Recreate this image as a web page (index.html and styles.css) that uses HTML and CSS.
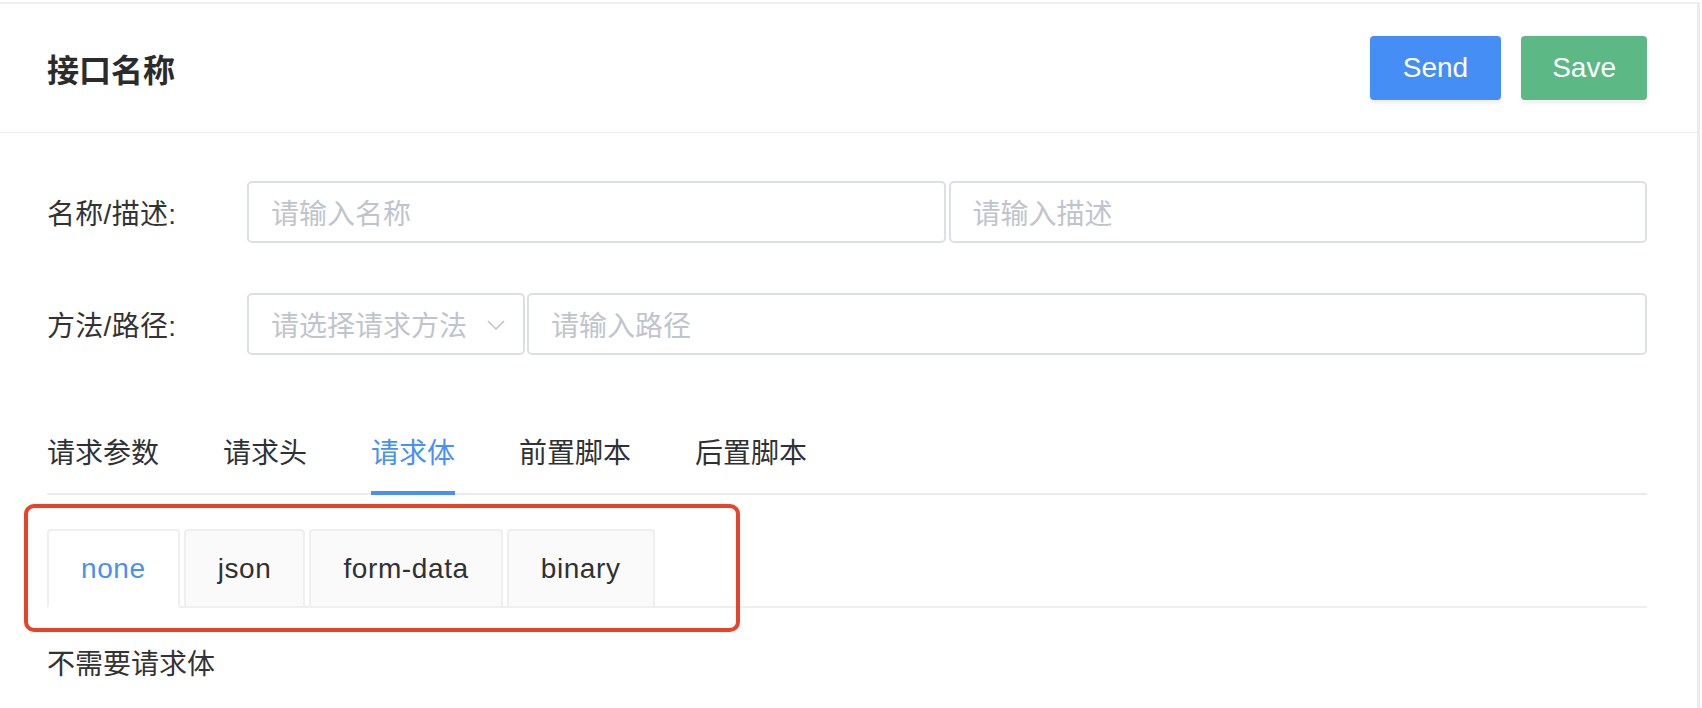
FILE: index.html
```html
<!DOCTYPE html>
<html lang="zh-CN">
<head>
<meta charset="utf-8">
<title>接口名称</title>
<link rel="stylesheet" href="styles.css">
</head>
<body>
<div class="page">
  <header class="topbar">
    <h1 class="title">接口名称</h1>
    <div class="actions">
      <button class="btn btn-send" type="button">Send</button>
      <button class="btn btn-save" type="button">Save</button>
    </div>
  </header>
  <main class="content">
    <div class="form-row">
      <label class="form-label">名称/描述:</label>
      <div class="form-fields">
        <input class="field field-grow" type="text" placeholder="请输入名称">
        <input class="field field-grow" type="text" placeholder="请输入描述">
      </div>
    </div>
    <div class="form-row">
      <label class="form-label">方法/路径:</label>
      <div class="form-fields">
        <div class="field select">
          <span class="select-ph">请选择请求方法</span>
          <svg class="select-arrow" width="18" height="10" viewBox="0 0 18 10"><polyline points="1,1 9,9 17,1" fill="none" stroke="#c0c4cc" stroke-width="1.6"/></svg>
        </div>
        <input class="field field-grow" type="text" placeholder="请输入路径">
      </div>
    </div>
    <nav class="tabs">
      <div class="tab"><span class="tab-label">请求参数</span></div>
      <div class="tab"><span class="tab-label">请求头</span></div>
      <div class="tab tab-active"><span class="tab-label">请求体</span></div>
      <div class="tab"><span class="tab-label">前置脚本</span></div>
      <div class="tab"><span class="tab-label">后置脚本</span></div>
    </nav>
    <div class="card-tabs">
      <div class="card-tab card-tab-active">none</div>
      <div class="card-tab">json</div>
      <div class="card-tab">form-data</div>
      <div class="card-tab">binary</div>
    </div>
    <p class="body-desc">不需要请求体</p>
  </main>
  <div class="annotation"></div>
</div>
</body>
</html>
```
FILE: styles.css
```css
html, body {
  margin: 0;
  padding: 0;
  height: 100%;
  overflow: hidden;
  background: #ffffff;
}

body {
  font-family: "Liberation Sans", "Noto Sans CJK SC", sans-serif;
  color: #303133;
}

.page {
  position: relative;
  box-sizing: border-box;
  width: 1700px;
  height: 706px;
  margin-top: 2px;
  border-top: 2px solid #efefef;
  border-right: 3px solid #ebebeb;
  background: #ffffff;
}

.topbar {
  box-sizing: border-box;
  height: 129px;
  padding: 0 50px 0 47px;
  display: flex;
  align-items: center;
  justify-content: space-between;
  border-bottom: 1px solid #ebeef5;
}

.title {
  margin: 0;
  font-family: "Noto Sans CJK SC", sans-serif;
  font-size: 32px;
  font-weight: 700;
  color: #2b2b2b;
  line-height: 40px;
}

.actions {
  display: flex;
  gap: 20px;
}

.btn {
  height: 64px;
  padding: 0 32px;
  border: none;
  border-radius: 4px;
  color: #ffffff;
  font-family: "Liberation Sans", sans-serif;
  font-size: 28px;
  box-shadow: 0 4px 3px rgba(0, 0, 0, 0.05);
  cursor: pointer;
}

.btn-send {
  background: #458ef6;
  padding: 0 33px;
}

.btn-save {
  background: #5cb885;
  padding: 0 31px;
}

.content {
  padding: 48px 50px 0 47px;
}

.form-row {
  display: flex;
  align-items: center;
  height: 62px;
}

.form-row + .form-row {
  margin-top: 50px;
}

.form-label {
  width: 200px;
  flex: none;
  font-size: 28px;
  color: #333333;
  letter-spacing: 0.3px;
}

.form-fields {
  flex: 1;
  display: flex;
  gap: 3px;
  height: 62px;
}

.field {
  box-sizing: border-box;
  height: 62px;
  border: 2px solid #dcdfe6;
  border-radius: 5px;
  padding: 0 22px;
  font-family: "Noto Sans CJK SC", sans-serif;
  font-size: 28px;
  color: #303133;
  background: #ffffff;
  outline: none;
}

.field::placeholder {
  color: #c0c4cc;
}

.field-grow {
  flex: 1;
  min-width: 0;
}

.select {
  width: 278px;
  flex: none;
  display: flex;
  align-items: center;
  justify-content: space-between;
  padding: 0 18px 0 22px;
  margin-right: -1px;
}

.select-ph {
  color: #c0c4cc;
  line-height: 1;
}

.select-arrow {
  display: block;
  margin-top: 2px;
}

.tabs {
  margin-top: 56px;
  display: flex;
  border-bottom: 2px solid #e9ebef;
}

.tab {
  padding: 0 32px;
  margin-bottom: -2px;
  font-family: "Noto Sans CJK SC", sans-serif;
  font-size: 28px;
  color: #303133;
}

.tab:first-child {
  padding-left: 0;
}

.tab-label {
  display: block;
  line-height: 80px;
  border-bottom: 4px solid transparent;
}

.tab-active {
  color: #4790f5;
}

.tab-active .tab-label {
  border-bottom-color: #4790f5;
}

.card-tabs {
  margin-top: 34px;
  display: flex;
  gap: 4px;
  border-bottom: 2px solid #efefef;
}

.card-tab {
  box-sizing: border-box;
  height: 79px;
  margin-bottom: -2px;
  padding: 0 32px;
  border: 2px solid #efefef;
  border-radius: 4px 4px 0 0;
  background: #fafafa;
  font-family: "Liberation Sans", sans-serif;
  font-size: 28px;
  letter-spacing: 0.6px;
  line-height: 75px;
  color: #303133;
}

.card-tab-active {
  background: #ffffff;
  border-bottom-color: #ffffff;
  color: #4790f5;
}

.body-desc {
  margin: 34px 0 0;
  font-family: "Noto Sans CJK SC", sans-serif;
  font-size: 28px;
  line-height: 40px;
  color: #333333;
}

.annotation {
  position: absolute;
  left: 24px;
  top: 500px;
  width: 716px;
  height: 128px;
  box-sizing: border-box;
  border: 4px solid #e8422a;
  border-radius: 10px;
  pointer-events: none;
}
```
